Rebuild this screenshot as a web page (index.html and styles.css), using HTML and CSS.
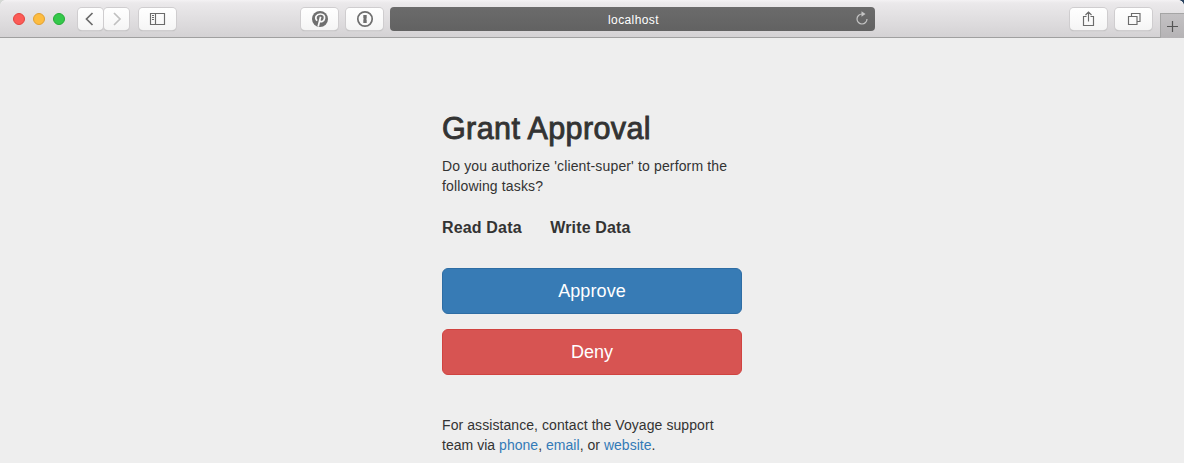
FILE: index.html
```html
<!DOCTYPE html>
<html lang="en">
<head>
<meta charset="utf-8">
<title>Grant Approval</title>
<link rel="stylesheet" href="styles.css">
</head>
<body>
<header class="toolbar">
  <div class="lights"><i class="light red"></i><i class="light yellow"></i><i class="light green"></i></div>
  <div class="nav">
    <span class="tool"><svg width="25" height="22" viewBox="0 0 25 22"><path d="M14.500 5 8.500 11l6 6" fill="none" stroke="#6b6b6b" stroke-width="1.700"/></svg></span>
    <span class="tool"><svg width="25" height="22" viewBox="0 0 25 22"><path d="M10 5l6 6-6 6" fill="none" stroke="#c0c0c0" stroke-width="1.700"/></svg></span>
  </div>
  <span class="tool wide sidebar"><svg width="37" height="22" viewBox="0 0 37 22"><path d="M11.500 5.500h14v11h-14zM16.500 5.500v11M13 7.500h2M13 9.500h2M13 11.500h2" fill="none" stroke="#6b6b6b" stroke-width="1.150"/></svg></span>
  <span class="tool wide pin"><svg width="37" height="22" viewBox="0 0 37 22"><circle cx="19" cy="11" r="8" fill="#6f6f6f"/><path d="M16 12.700c-2.700-3.100-.5-6.700 3.400-6.700 3 0 4.600 2 4.100 4.500-.6 3.200-3.700 4-4.900 2M19.600 8.700 17.200 18.500" fill="none" stroke="#fafafa" stroke-width="1.700"/></svg></span>
  <span class="tool wide lock"><svg width="37" height="22" viewBox="0 0 37 22"><circle cx="19" cy="11" r="7.200" fill="none" stroke="#6f6f6f" stroke-width="1.700"/><path d="M17.300 7h3.400v3.400l-.6.600.6.700V15h-3.400v-3.400l.6-.6-.6-.7z" fill="#6f6f6f"/></svg></span>
  <div class="address"><span>localhost</span><svg class="reload" width="14" height="16" viewBox="0 0 14 16"><path d="M7 4A5 5 0 1 0 12 9" fill="none" stroke="#c4c4c4" stroke-width="1.200"/><path d="M6.500 1.300 10.500 4 6.500 6.700z" fill="#c4c4c4"/></svg></div>
  <span class="tool wide share"><svg width="37" height="22" viewBox="0 0 37 22"><path d="M16.500 8.500h-3v9h10v-9h-3M18.500 13.500V4.500M15.500 7l3-3 3 3" fill="none" stroke="#6b6b6b" stroke-width="1.150"/></svg></span>
  <span class="tool wide tabs"><svg width="37" height="22" viewBox="0 0 37 22"><path d="M13.500 8.500h8.500v8h-8.500zM16.500 8.500v-3h8.500v8h-3" fill="none" stroke="#6b6b6b" stroke-width="1.150"/></svg></span>
  <span class="newtab"><svg width="23" height="24" viewBox="0 0 23 24"><path d="M11.500 7v11M6 12.500h11" fill="none" stroke="#555" stroke-width="1.200"/></svg></span>
</header>
<main class="content">
  <h1 class="title">Grant Approval</h1>
  <p class="text question">Do you authorize 'client-super' to perform the<br>following tasks?</p>
  <div class="scopes"><span>Read Data</span><span>Write Data</span></div>
  <button class="btn approve">Approve</button>
  <button class="btn deny">Deny</button>
  <p class="text help">For assistance, contact the Voyage support<br><span class="links">team via <a href="#">phone</a>, <a href="#">email</a>, or <a href="#">website</a>.</span></p>
</main>
</body>
</html>
```
FILE: styles.css
```css
* { box-sizing: border-box; }
html, body { margin: 0; height: 100%; overflow: hidden; }
body {
  background: #eee;
  color: #333;
  font-family: "Liberation Sans", Helvetica, Arial, sans-serif;
}
svg { display: block; }
.toolbar {
  display: flex;
  align-items: flex-start;
  height: 38px;
  padding: 7px 0 0 13px;
  border-bottom: 1px solid #a0a0a0;
  background:
    radial-gradient(circle at 0 5px, transparent 4.500px, #29425f 5px) right top / 5px 5px no-repeat,
    radial-gradient(circle at 5px 5px, transparent 4.500px, #d5d8d5 5px) left top / 5px 5px no-repeat,
    linear-gradient(#f4f2f4 0, #ebe9eb 3px, #d4d2d4 100%);
}
.lights { display: flex; gap: 8px; padding-top: 6px; width: 65px; }
.light { width: 12px; height: 12px; border-radius: 50%; }
.red { background: #fc5b57; border: 1px solid #e2443f; }
.yellow { background: #fdbc40; border: 1px solid #e0a033; }
.green { background: #34c84a; border: 1px solid #24ab36; }
.nav { display: flex; gap: 1px; width: 60px; }
.tool {
  width: 25px;
  height: 22px;
  margin-top: 1px;
  border-radius: 4px;
  background: linear-gradient(#fff, #f5f5f5);
  box-shadow: 0 0 0 1px #cfcdcf, 0 1px 1px #aaa;
  flex: none;
}
.wide { width: 37px; }
.sidebar { margin-left: 1px; }
.pin { margin-left: 125px; }
.lock { margin-left: 8px; }
.address {
  display: flex;
  align-items: center;
  justify-content: flex-end;
  width: 485px;
  height: 24px;
  margin-left: 7px;
  padding-right: 6px;
  border-radius: 4px;
  background: linear-gradient(#6b6b6b, #626262);
  color: #fff;
  font-size: 12px;
}
.address span { flex: 1; padding: 2px 0 0 218px; letter-spacing: .4px; }
.reload { margin-top: -3px; }
.share { margin-left: 195px; }
.tabs { margin-left: 8px; }
.newtab {
  width: 24px;
  height: 25px;
  margin: 6px 0 0 auto;
  border: solid #a5a5a5;
  border-width: 1px 0 0 1px;
  background: linear-gradient(#c3c1c3, #b5b3b5);
}
.content { width: 300px; margin: 0 auto; padding-top: 74px; }
.title {
  margin: 0;
  font-size: 30.500px;
  line-height: 33px;
  font-weight: 400;
  letter-spacing: .4px;
  white-space: nowrap;
  -webkit-text-stroke: .9px #333;
}
.text { margin: 11px 0 0; font-size: 14px; line-height: 20px; white-space: nowrap; }
.question { letter-spacing: .145px; }
.scopes {
  display: flex;
  gap: 28.500px;
  margin: 21px 0 29px;
  font-size: 16px;
  line-height: 22px;
  font-weight: 700;
  letter-spacing: .16px;
  white-space: nowrap;
}
.btn {
  display: block;
  width: 300px;
  height: 46px;
  margin: 0 0 15px;
  padding: 0;
  border-radius: 6px;
  border: 1px solid;
  color: #fff;
  font: 18px/24px "Liberation Sans", Helvetica, Arial, sans-serif;
}
.approve { background: #377bb5; border-color: #2e6da4; letter-spacing: .1px; }
.deny { background: #d75452; border-color: #d04340; }
.help { margin-top: 40px; letter-spacing: .075px; }
.links { letter-spacing: .03px; }
a { color: #337ab7; text-decoration: none; }
```
